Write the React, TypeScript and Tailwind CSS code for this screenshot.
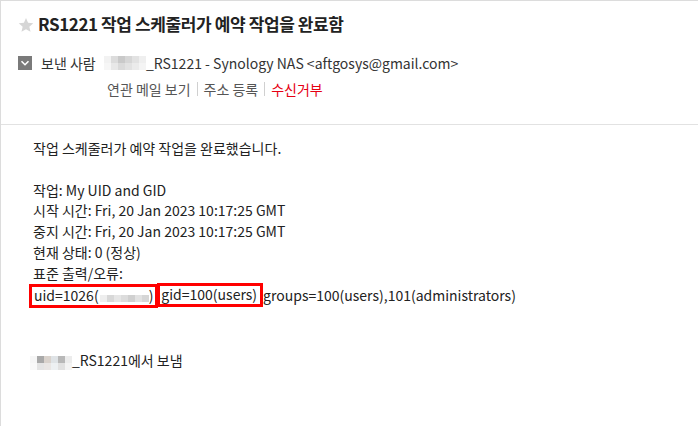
import React from "react";

const FONT = { fontFamily: '"Noto Sans CJK KR", "Noto Sans", sans-serif' };

function Pixels({ rows, size = 7 }: { rows: string[][]; size?: number }) {
  return (
    <span className="inline-flex flex-col align-middle">
      {rows.map((r, i) => (
        <span key={i} className="flex">
          {r.map((c, j) => (
            <span key={j} className="block" style={{ background: c, width: size, height: size }} />
          ))}
        </span>
      ))}
    </span>
  );
}

export default function App() {
  return (
    <div
      className="w-[698px] h-[426px] bg-white border-t border-l border-[#dcdcdc] overflow-hidden text-[#222]"
      style={FONT}
    >
      <div className="pt-[11px]">
        <div className="flex items-center pl-[17px] h-[24px]">
          <svg width="16" height="16" viewBox="0 0 24 24" className="mr-[4px] mt-[1px]">
            <path
              d="M12 1.5l3.1 7.2 7.8.7-5.9 5.2 1.8 7.7L12 18.2l-6.8 4.1 1.8-7.7L1.1 9.4l7.8-.7z"
              fill="#d6d6d6"
            />
          </svg>
          <span className="text-[17px] font-bold leading-[24px] tracking-[-0.4px]">
            RS1221 작업 스케줄러가 예약 작업을 완료함
          </span>
        </div>

        <div className="flex items-center pl-[17px] mt-[17px] h-[20px] text-[14px] text-[#333]">
          <span className="w-[14px] h-[14px] bg-[#7a7a7a] flex items-center justify-center mr-[9px]">
            <svg width="10" height="10" viewBox="0 0 10 10">
              <path d="M1.5 3.2L5 6.7l3.5-3.5" stroke="#fff" strokeWidth="1.6" fill="none" />
            </svg>
          </span>
          <span className="w-[63px]">보낸 사람</span>
          <Pixels
            rows={[
              ["#f2f2f2", "#dcdcdc", "#c9c9c9", "#d6d6d6", "#e2e2e2", "#efefef"],
              ["#f6f6f6", "#e8e8e8", "#dadada", "#e2e2e2", "#ebebeb", "#f4f4f4"],
            ]}
          />
          <span>_RS1221 - Synology NAS &lt;aftgosys@gmail.com&gt;</span>
        </div>

        <div className="flex items-center pl-[106px] mt-[6px] h-[20px] text-[14px] text-[#555]">
          <span>연관 메일 보기</span>
          <span className="w-px h-[14px] bg-[#d0d0d0] mx-[6px]" />
          <span>주소 등록</span>
          <span className="w-px h-[14px] bg-[#d0d0d0] mx-[6px]" />
          <span className="text-[#e60012]">수신거부</span>
        </div>
      </div>

      <div className="mt-[25px] border-t border-[#e2e2e2]" />

      <div className="pl-[32px] pt-[13px] text-[14px] leading-[20.8px] text-[#222]">
        <div>작업 스케줄러가 예약 작업을 완료했습니다.</div>
        <div className="h-[20.8px]" />
        <div>작업: My UID and GID</div>
        <div>시작 시간: Fri, 20 Jan 2023 10:17:25 GMT</div>
        <div>중지 시간: Fri, 20 Jan 2023 10:17:25 GMT</div>
        <div>현재 상태: 0 (정상)</div>
        <div>표준 출력/오류:</div>
        <div className="flex items-center">
          <span className="ml-[-4px] pl-[2px] pr-[2px] h-[24px] flex items-center border-[3px] border-[#ff0000]">
            <span>uid=1026(</span>
            <span className="mt-[3px] ml-[1px]">
              <Pixels
                size={7}
                rows={[["#eeeeee", "#d8d8d8", "#e6e6e6", "#dcdcdc", "#d0d0d0", "#e2e2e2", "#d6d6d6"]]}
              />
            </span>
            <span>)</span>
          </span>
          <span className="pl-[1px] pr-[3px] h-[24px] flex items-center border-[3px] border-[#ff0000] mt-[-2px] ml-[-1px]">
            gid=100(users)
          </span>
          <span>groups=100(users),101(administrators)</span>
        </div>
        <div className="h-[20.8px]" />
        <div className="h-[22px]" />
        <div className="flex items-center">
          <span className="ml-[-3px]">
            <Pixels
              rows={[
                ["#f6f6f6", "#a9a9a9", "#d9d2cc", "#dfe3e6", "#b8b8b8", "#ececec"],
                ["#f9f9f9", "#e4e4e4", "#e9e6e4", "#edf0f2", "#e1e1e1", "#f4f4f4"],
              ]}
            />
          </span>
          <span>_RS1221에서 보냄</span>
        </div>
      </div>
    </div>
  );
}
